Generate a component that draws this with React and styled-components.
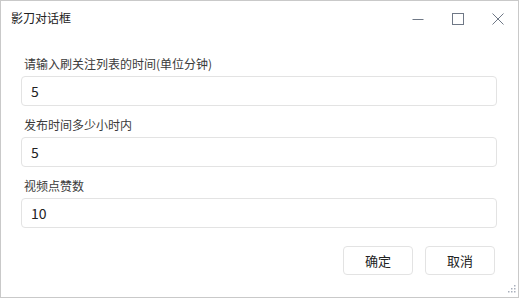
import React from 'react';
import styled, { createGlobalStyle } from 'styled-components';

const GlobalStyle = createGlobalStyle`
  html, body {
    margin: 0;
    padding: 0;
    background: #ffffff;
  }
  body {
    font-family: "Noto Sans CJK SC", "Noto Sans", sans-serif;
    color: #333333;
  }
`;

const Window = styled.div`
  position: relative;
  box-sizing: border-box;
  width: 519px;
  height: 298px;
  border: 1px solid #c9c9c9;
  background: #ffffff;
  display: flex;
  flex-direction: column;
`;

const TitleBar = styled.div`
  height: 35px;
  display: flex;
  align-items: center;
  justify-content: space-between;
  padding-left: 10px;
`;

const Title = styled.div`
  font-size: 12px;
  color: #222222;
  line-height: 1;
  margin-top: -1px;
`;

const Controls = styled.div`
  display: flex;
  align-items: center;
  height: 100%;
`;

const ControlButton = styled.div`
  width: 40px;
  height: 100%;
  display: flex;
  align-items: center;
  justify-content: center;
`;

const Body = styled.div`
  flex: 1;
  display: flex;
  flex-direction: column;
  padding: 18px 22px 0 20px;
`;

const Field = styled.div`
  display: flex;
  flex-direction: column;
  margin-bottom: 9px;
`;

const Label = styled.label`
  font-size: 12px;
  line-height: 20px;
  height: 20px;
  margin-bottom: 2px;
  padding-left: 3px;
  color: #3a3a3a;
`;

const Input = styled.input`
  box-sizing: border-box;
  width: 476px;
  height: 30px;
  border: 1px solid #e3e3e3;
  border-radius: 4px;
  padding: 0 9px;
  font-size: 14px;
  font-family: "Noto Sans CJK SC", "Noto Sans", sans-serif;
  color: #222222;
  outline: none;
  background: #ffffff;
`;

const Footer = styled.div`
  display: flex;
  justify-content: flex-end;
  gap: 12px;
  margin-top: 9px;
  padding-right: 1px;
`;

const Button = styled.button`
  box-sizing: border-box;
  width: 70px;
  height: 29px;
  border: 1px solid #e3e3e3;
  border-radius: 4px;
  background: #ffffff;
  font-size: 13px;
  font-family: "Noto Sans CJK SC", "Noto Sans", sans-serif;
  color: #222222;
  padding: 0;
`;

const Grip = styled.svg`
  position: absolute;
  right: 2px;
  bottom: 2px;
`;

const fields = [
  { label: '请输入刷关注列表的时间(单位分钟)', value: '5' },
  { label: '发布时间多少小时内', value: '5' },
  { label: '视频点赞数', value: '10' },
];

const App = () => {
  return (
    <>
      <GlobalStyle />
      <Window>
        <TitleBar>
          <Title>影刀对话框</Title>
          <Controls>
            <ControlButton>
              <svg width="12" height="12" viewBox="0 0 12 12">
                <path d="M0.5 6.5h11" stroke="#6f7886" strokeWidth="1" />
              </svg>
            </ControlButton>
            <ControlButton>
              <svg width="12" height="12" viewBox="0 0 12 12">
                <rect x="0.5" y="0.5" width="11" height="11" fill="none" stroke="#6f7886" strokeWidth="1" />
              </svg>
            </ControlButton>
            <ControlButton>
              <svg width="12" height="12" viewBox="0 0 12 12">
                <path d="M0.5 0.5l11 11M11.5 0.5l-11 11" stroke="#6f7886" strokeWidth="1" />
              </svg>
            </ControlButton>
          </Controls>
        </TitleBar>
        <Body>
          {fields.map((f) => (
            <Field key={f.label}>
              <Label>{f.label}</Label>
              <Input defaultValue={f.value} />
            </Field>
          ))}
          <Footer>
            <Button>确定</Button>
            <Button>取消</Button>
          </Footer>
        </Body>
        <Grip width="10" height="10" viewBox="0 0 10 10">
          {[[8, 0], [8, 3], [5, 3], [8, 6], [5, 6], [2, 6]].map(([x, y]) => (
            <rect key={`${x}-${y}`} x={x} y={y} width="1.5" height="1.5" fill="#a9b0bc" />
          ))}
        </Grip>
      </Window>
    </>
  );
};

export default App;
